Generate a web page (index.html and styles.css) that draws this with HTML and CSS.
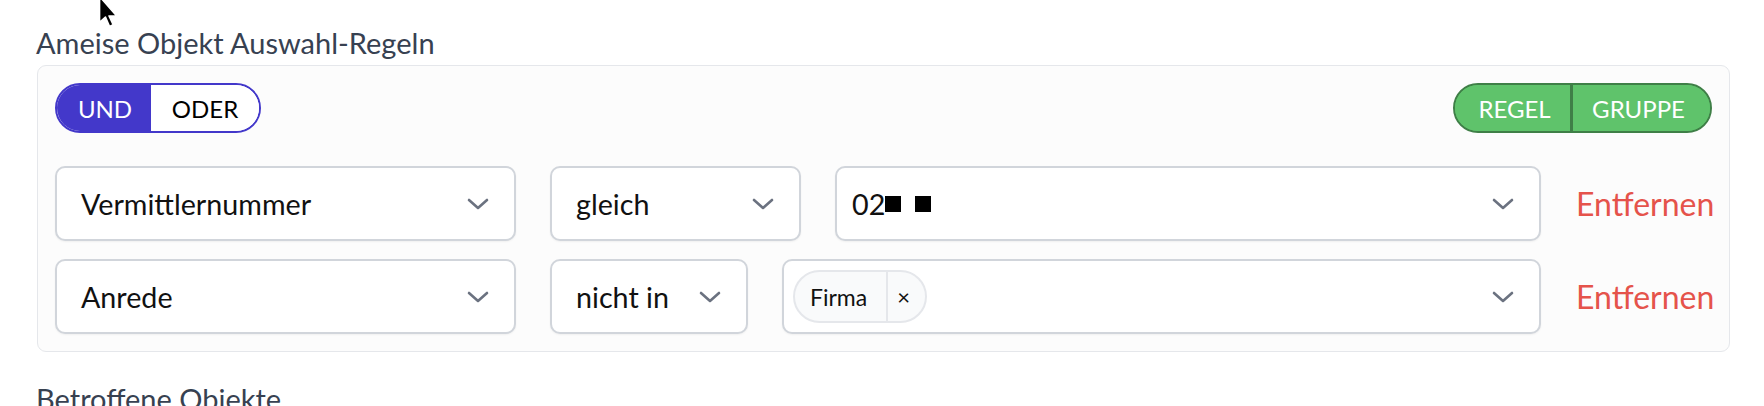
FILE: index.html
```html
<!DOCTYPE html>
<html lang="de">
<head>
<meta charset="utf-8">
<title>Ameise Objekt Auswahl-Regeln</title>
<link rel="stylesheet" href="styles.css">
</head>
<body>
<div class="page">
  <h2 class="section-title">Ameise Objekt Auswahl-Regeln</h2>
  <div class="card">
    <div class="top-bar">
      <div class="toggle">
        <button class="toggle-btn active">UND</button>
        <button class="toggle-btn">ODER</button>
      </div>
      <div class="add-group">
        <button class="add-btn add-rule">REGEL</button>
        <button class="add-btn add-grp">GRUPPE</button>
      </div>
    </div>
    <div class="rules">
      <div class="rule">
        <div class="select field">
          <span class="select-text">Vermittlernummer</span>
          <svg class="chev" viewBox="0 0 22 12" width="22" height="12"><path d="M2 2 L11 10 L20 2"/></svg>
        </div>
        <div class="select op op-wide">
          <span class="select-text">gleich</span>
          <svg class="chev" viewBox="0 0 22 12" width="22" height="12"><path d="M2 2 L11 10 L20 2"/></svg>
        </div>
        <div class="select value value-text">
          <span class="select-text">02<span class="redact"></span><span class="redact gap"></span></span>
          <svg class="chev" viewBox="0 0 22 12" width="22" height="12"><path d="M2 2 L11 10 L20 2"/></svg>
        </div>
        <button class="remove">Entfernen</button>
      </div>
      <div class="rule">
        <div class="select field">
          <span class="select-text">Anrede</span>
          <svg class="chev" viewBox="0 0 22 12" width="22" height="12"><path d="M2 2 L11 10 L20 2"/></svg>
        </div>
        <div class="select op op-narrow">
          <span class="select-text">nicht in</span>
          <svg class="chev" viewBox="0 0 22 12" width="22" height="12"><path d="M2 2 L11 10 L20 2"/></svg>
        </div>
        <div class="select value value-chips">
          <span class="chip"><span class="chip-label">Firma</span><span class="chip-x">×</span></span>
          <svg class="chev" viewBox="0 0 22 12" width="22" height="12"><path d="M2 2 L11 10 L20 2"/></svg>
        </div>
        <button class="remove">Entfernen</button>
      </div>
    </div>
  </div>
  <h2 class="section-title next">Betroffene Objekte</h2>
</div>
<svg class="cursor" viewBox="0 0 20 28" width="24" height="33"><path d="M2 -3 L2 19 L7 14.5 L10.5 22.5 L13.5 21 L10 13.5 L16.5 13.5 Z" fill="#000" stroke="#fff" stroke-width="1.3" stroke-linejoin="round"/></svg>
</body>
</html>
```
FILE: styles.css
```css
* { box-sizing: border-box; }
html, body {
  margin: 0;
  padding: 0;
  background: #ffffff;
  overflow: hidden;
}
body {
  font-family: "Lato", "Noto Sans", "Liberation Sans", sans-serif;
  color: #111111;
  position: relative;
  height: 406px;
}
.page {
  padding: 26px 34px 0 37px;
}
.section-title {
  margin: 0 0 6px -1px;
  font-size: 29px;
  line-height: 33px;
  font-weight: 400;
  color: #374151;
}
.section-title.next {
  margin-top: 30px;
}
.card {
  border: 1px solid #e5e7eb;
  border-radius: 9px;
  background: #fcfcfc;
  padding: 17px;
}
.top-bar {
  display: flex;
  justify-content: space-between;
  align-items: center;
  height: 50px;
}
.toggle {
  display: flex;
  height: 50px;
  border: 2px solid #4338ca;
  border-radius: 25px;
  overflow: hidden;
  background: #fff;
}
.toggle-btn {
  border: 0;
  margin: 0;
  font-family: inherit;
  font-size: 24px;
  padding: 0;
  width: 108px;
  text-align: center;
  background: #fff;
  color: #000;
}
.toggle-btn.active {
  background: #4338ca;
  color: #fff;
  width: 94px;
  padding-left: 2px;
}
.add-group {
  display: flex;
  height: 50px;
  border: 2px solid #3f7f47;
  border-radius: 25px;
  overflow: hidden;
  background: #5fc36b;
}
.add-btn {
  border: 0;
  margin: 0;
  font-family: inherit;
  font-size: 24px;
  color: #fff;
  background: #5fc36b;
  padding: 0;
  text-align: center;
}
.add-rule { width: 115px; padding-left: 4px; }
.add-grp {
  width: 140px;
  border-left: 3px solid #3f7f47;
  padding-right: 6px;
}
.rules {
  display: flex;
  flex-direction: column;
  gap: 18px;
  margin-top: 33px;
}
.rule {
  display: flex;
  align-items: center;
  height: 75px;
}
.select {
  height: 75px;
  display: flex;
  align-items: center;
  justify-content: space-between;
  border: 2px solid #d1d5db;
  border-radius: 10px;
  background: #fff;
  padding: 0 25px 0 24px;
  box-shadow: 0 1px 2px rgba(0,0,0,0.05);
  font-size: 28.7px;
}
.field { width: 461px; }
.op { margin-left: 34px; }
.op-wide { width: 251px; }
.op-narrow { width: 198px; }
.value {
  flex: 1;
  margin-left: 34px;
}
.value-text { padding-left: 15px; }
.value-chips { padding-left: 9px; }
.select-text {
  display: flex;
  align-items: center;
  white-space: nowrap;
}
.redact {
  display: inline-block;
  width: 16px;
  height: 16px;
  background: #000;
  margin-left: 0;
}
.redact.gap { margin-left: 14px; }
.chev {
  flex: none;
  fill: none;
  stroke: #6b7280;
  stroke-width: 2.6;
  stroke-linecap: round;
  stroke-linejoin: round;
}
.chip {
  display: flex;
  align-items: stretch;
  height: 53px;
  border: 2px solid #e5e7eb;
  border-radius: 27px;
  background: #f9fafb;
  font-size: 23px;
  overflow: hidden;
}
.chip-label {
  display: flex;
  align-items: center;
  padding: 0 19px 0 15px;
}
.chip-x {
  display: flex;
  align-items: center;
  border-left: 2px solid #e5e7eb;
  padding: 0 15px 0 9px;
  font-size: 22px;
}
.remove {
  flex: none;
  width: 136px;
  margin-left: 35px;
  border: 0;
  background: transparent;
  padding: 0;
  text-align: right;
  white-space: nowrap;
  font-family: inherit;
  font-size: 32px;
  color: #e5534b;
}
.cursor {
  position: absolute;
  left: 97px;
  top: 0;
}
```
